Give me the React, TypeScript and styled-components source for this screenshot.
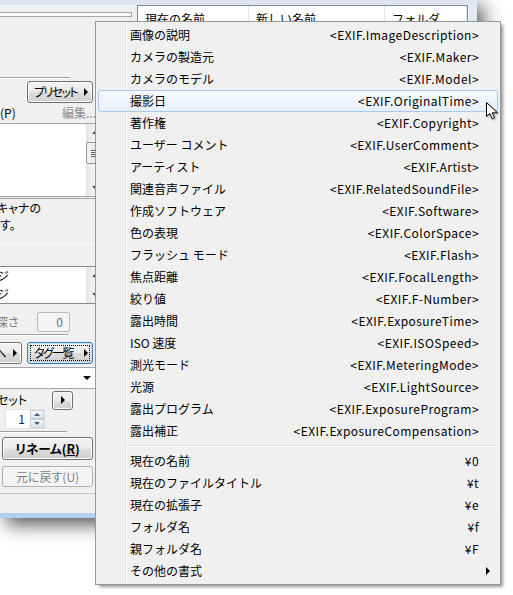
import React from 'react';
import styled, { createGlobalStyle, css } from 'styled-components';

type MenuEntry = { label: string; code?: string; sub?: boolean; hot?: boolean };

const exifItems: MenuEntry[] = [
  { label: '画像の説明', code: '<EXIF.ImageDescription>' },
  { label: 'カメラの製造元', code: '<EXIF.Maker>' },
  { label: 'カメラのモデル', code: '<EXIF.Model>' },
  { label: '撮影日', code: '<EXIF.OriginalTime>', hot: true },
  { label: '著作権', code: '<EXIF.Copyright>' },
  { label: 'ユーザー コメント', code: '<EXIF.UserComment>' },
  { label: 'アーティスト', code: '<EXIF.Artist>' },
  { label: '関連音声ファイル', code: '<EXIF.RelatedSoundFile>' },
  { label: '作成ソフトウェア', code: '<EXIF.Software>' },
  { label: '色の表現', code: '<EXIF.ColorSpace>' },
  { label: 'フラッシュ モード', code: '<EXIF.Flash>' },
  { label: '焦点距離', code: '<EXIF.FocalLength>' },
  { label: '絞り値', code: '<EXIF.F-Number>' },
  { label: '露出時間', code: '<EXIF.ExposureTime>' },
  { label: 'ISO 速度', code: '<EXIF.ISOSpeed>' },
  { label: '測光モード', code: '<EXIF.MeteringMode>' },
  { label: '光源', code: '<EXIF.LightSource>' },
  { label: '露出プログラム', code: '<EXIF.ExposureProgram>' },
  { label: '露出補正', code: '<EXIF.ExposureCompensation>' },
];

const nameItems: MenuEntry[] = [
  { label: '現在の名前', code: '¥0' },
  { label: '現在のファイルタイトル', code: '¥t' },
  { label: '現在の拡張子', code: '¥e' },
  { label: 'フォルダ名', code: '¥f' },
  { label: '親フォルダ名', code: '¥F' },
  { label: 'その他の書式', sub: true },
];

function MenuRow({ item }: { item: MenuEntry }) {
  return (
    <Item $hot={item.hot}>
      <ItemLabel>{item.label}</ItemLabel>
      {item.code && <ItemCode>{item.code}</ItemCode>}
      <ItemTail>{item.sub && <SubArrow />}</ItemTail>
    </Item>
  );
}

function VScroll({ thumb }: { thumb?: boolean }) {
  return (
    <ScrollBar>
      <ScrollButton>
        <TriUp />
      </ScrollButton>
      <ScrollTrack>{thumb && <Thumb><Grip /></Thumb>}</ScrollTrack>
      <ScrollButton>
        <TriDown />
      </ScrollButton>
    </ScrollBar>
  );
}

function App() {
  return (
    <Screen>
      <GlobalStyle />
      <Window>
        <Body>
          <LeftColumn>
            <TopTrack />
            <Panel>
              <Etched $w={70} $top={60} />
              <ButtonRow $top={2}>
                <ArrowButton $left={27}>
                  <ButtonText>プリセット</ButtonText>
                  <RightTri />
                </ArrowButton>
              </ButtonRow>
              <LabelRow>
                <span>(P)</span>
                <GrayText>編集...</GrayText>
              </LabelRow>
              <TextBox>
                <VScroll thumb />
              </TextBox>
              <Description>
                <DescLine $cut={3}>キャナの</DescLine>
                <DescLine $cut={0}>す。</DescLine>
              </Description>
              <Band />
              <ListBox>
                <ListLines>
                  <ListLine>
                    <Clipped $cut={3}>ジ</Clipped>
                  </ListLine>
                  <ListLine>
                    <Clipped $cut={3}>ジ</Clipped>
                  </ListLine>
                </ListLines>
                <VScroll />
              </ListBox>
              <DepthRow>
                <DepthLabel>深さ</DepthLabel>
                <NumberBox>0</NumberBox>
              </DepthRow>
              <Etched $w={68} $top={2} />
              <ButtonRow $top={6}>
                <ArrowButton $left={-44} $clipped>
                  <ButtonText>へ</ButtonText>
                  <RightTri />
                </ArrowButton>
                <ArrowButton $left={5} $focus>
                  <ButtonText>タグ一覧</ButtonText>
                  <RightTri />
                </ArrowButton>
              </ButtonRow>
              <Combo>
                <DownTri />
              </Combo>
              <PresetRow>
                <PresetLabel>セット</PresetLabel>
                <SmallButton>
                  <RightTri />
                </SmallButton>
              </PresetRow>
              <Spin>
                <SpinValue>1</SpinValue>
                <SpinButtons>
                  <SpinButton>
                    <TriUp $color="#3b5a8c" />
                  </SpinButton>
                  <SpinButton>
                    <TriDown $color="#3b5a8c" />
                  </SpinButton>
                </SpinButtons>
              </Spin>
              <Etched $w={67} $top={2} />
              <PushButton $top={4} $h={23}>
                <Bold>
                  リネーム(<u>R</u>)
                </Bold>
              </PushButton>
              <PushButton $top={6} $h={21} disabled>
                元に戻す(U)
              </PushButton>
            </Panel>
          </LeftColumn>
          <ListView>
            <ListHeader>
              <HeaderCell $w={111}>現在の名前</HeaderCell>
              <HeaderCell $w={136}>新しい名前</HeaderCell>
              <HeaderCell $w={82}>フォルダ</HeaderCell>
            </ListHeader>
          </ListView>
        </Body>
        <StatusBar />
      </Window>

      <Menu>
        {exifItems.map((it) => (
          <MenuRow key={it.label} item={it} />
        ))}
        <Separator />
        {nameItems.map((it) => (
          <MenuRow key={it.label} item={it} />
        ))}
      </Menu>

      <Cursor width="14" height="19" viewBox="0 0 14 19">
        <path
          d="M0.5 0.5 L0.5 14.5 L3.8 11.5 L6.2 16.8 L8.5 15.8 L6.2 10.8 L11.5 10.8 Z"
          fill="#fff"
          stroke="#000"
          strokeWidth="1"
          strokeLinejoin="miter"
        />
      </Cursor>
    </Screen>
  );
}

const GlobalStyle = createGlobalStyle`
  html, body {
    margin: 0;
    padding: 0;
    background: #fff;
  }
  body {
    font-family: "Noto Sans CJK JP", "Noto Sans", sans-serif;
    font-size: 12px;
    color: #000;
    overflow: hidden;
  }
`;

const Screen = styled.div`
  position: relative;
  width: 513px;
  height: 595px;
  overflow: hidden;
  background: #fff;
`;

const Window = styled.div`
  width: 477px;
  height: 518px;
  box-sizing: border-box;
  display: flex;
  flex-direction: column;
  background: #f0f0f0;
  border-top: 5px solid #dfe5ee;
  border-right: 8px solid #e3eaf3;
  border-bottom: 5px solid #b3cfee;
  box-shadow: 6px 6px 18px rgba(0, 0, 0, 0.7);
`;

const Body = styled.div`
  flex: 1;
  display: flex;
  min-height: 0;
`;

const StatusBar = styled.div`
  height: 20px;
  box-sizing: border-box;
  border-top: 1px solid #c2c2c2;
  background: #efefef;
`;

const LeftColumn = styled.div`
  width: 133px;
  display: flex;
  flex-direction: column;
`;

const TopTrack = styled.div`
  margin-top: 7px;
  width: 132px;
  height: 5px;
  box-sizing: border-box;
  border: 1px solid #a5a5a5;
  border-left: none;
  background: #fbfbfb;
`;

const Panel = styled.div`
  width: 104px;
  display: flex;
  flex-direction: column;
  font-feature-settings: 'palt';
`;

const Etched = styled.div<{ $w: number; $top: number }>`
  width: ${(p) => p.$w}px;
  margin-top: ${(p) => p.$top}px;
  height: 2px;
  box-sizing: border-box;
  border-top: 1px solid #a0a0a0;
  border-bottom: 1px solid #fff;
`;

const ButtonRow = styled.div<{ $top: number }>`
  display: flex;
  margin-top: ${(p) => p.$top}px;
  height: 22px;
`;

const buttonFace = css`
  box-sizing: border-box;
  border: 1px solid #707070;
  border-radius: 3px;
  background: linear-gradient(#f2f2f2 0%, #ebebeb 50%, #dddddd 51%, #cfcfcf 100%);
  box-shadow: inset 0 0 0 1px #fcfcfc;
`;

const ArrowButton = styled.div<{ $left: number; $focus?: boolean; $clipped?: boolean }>`
  ${buttonFace};
  flex: none;
  width: 66px;
  height: 22px;
  margin-left: ${(p) => p.$left}px;
  display: flex;
  align-items: center;
  justify-content: space-between;
  padding: 0 4px 0 6px;
  line-height: 20px;
  white-space: nowrap;
  ${(p) =>
    p.$clipped &&
    css`
      justify-content: flex-end;
      gap: 8px;
    `}
  ${(p) =>
    p.$focus &&
    css`
      border-color: #3c7fb1;
      box-shadow: inset 0 0 0 1px #bfe6f9;
      outline: 1px dotted #000;
      outline-offset: -4px;
    `}
`;

const ButtonText = styled.span`
  letter-spacing: -1.6px;
`;

const SmallButton = styled.div`
  ${buttonFace};
  width: 21px;
  height: 19px;
  display: flex;
  align-items: center;
  justify-content: center;
`;

const PushButton = styled.div<{ $top: number; $h: number; disabled?: boolean }>`
  ${buttonFace};
  margin-top: ${(p) => p.$top}px;
  margin-left: 2px;
  width: 91px;
  height: ${(p) => p.$h}px;
  display: flex;
  align-items: center;
  justify-content: center;
  white-space: nowrap;
  ${(p) =>
    p.disabled &&
    css`
      border-color: #adb2b5;
      background: #f4f4f4;
      box-shadow: none;
      color: #838383;
    `}
`;

const Bold = styled.span`
  font-weight: 700;
  font-size: 12.5px;
`;

const RightTri = styled.span`
  flex: none;
  width: 0;
  height: 0;
  border-top: 4px solid transparent;
  border-bottom: 4px solid transparent;
  border-left: 4px solid #000;
`;

const DownTri = styled.span`
  width: 0;
  height: 0;
  border-left: 4px solid transparent;
  border-right: 4px solid transparent;
  border-top: 4px solid #000;
`;

const TriUp = styled.span<{ $color?: string }>`
  width: 0;
  height: 0;
  border-left: 3px solid transparent;
  border-right: 3px solid transparent;
  border-bottom: 3px solid ${(p) => p.$color ?? '#4a4a4a'};
`;

const TriDown = styled.span<{ $color?: string }>`
  width: 0;
  height: 0;
  border-left: 3px solid transparent;
  border-right: 3px solid transparent;
  border-top: 3px solid ${(p) => p.$color ?? '#4a4a4a'};
`;

const LabelRow = styled.div`
  width: 96px;
  height: 17px;
  margin-top: 1px;
  display: flex;
  justify-content: space-between;
  align-items: center;
  line-height: 17px;
  white-space: nowrap;
`;

const GrayText = styled.span`
  color: #8d8d8d;
`;

const Clipped = styled.span<{ $cut: number }>`
  display: inline-block;
  margin-left: -${(p) => p.$cut}px;
  white-space: nowrap;
  flex: none;
`;

const TextBox = styled.div`
  margin-top: 2px;
  height: 74px;
  box-sizing: border-box;
  border: 1px solid #a0a0a0;
  border-left: none;
  background: #fff;
  display: flex;
  justify-content: flex-end;
`;

const ScrollBar = styled.div`
  width: 17px;
  display: flex;
  flex-direction: column;
  background: linear-gradient(to right, #e3e3e3, #f1f1f1 40%, #f4f4f4);
`;

const ScrollButton = styled.div`
  height: 17px;
  flex: none;
  display: flex;
  align-items: center;
  justify-content: center;
`;

const ScrollTrack = styled.div`
  flex: 1;
  display: flex;
  flex-direction: column;
`;

const Thumb = styled.div`
  margin-top: 1px;
  height: 22px;
  box-sizing: border-box;
  border: 1px solid #959595;
  border-radius: 2px;
  background: linear-gradient(to right, #f4f4f4, #e8e8e8 50%, #d9d9d9);
  display: flex;
  align-items: center;
  justify-content: center;
`;

const Grip = styled.div`
  width: 7px;
  height: 7px;
  background: repeating-linear-gradient(#5a5a5a 0 1px, #fbfbfb 1px 2px);
`;

const Description = styled.div`
  margin-top: 1px;
  height: 46px;
  box-sizing: border-box;
  border-top: 1px solid #a8a8a8;
  display: flex;
  flex-direction: column;
  align-items: flex-start;
  overflow: hidden;
`;

const DescLine = styled.span<{ $cut: number }>`
  height: 17px;
  line-height: 17px;
  margin-left: -${(p) => p.$cut}px;
  white-space: nowrap;
`;

const Band = styled.div`
  height: 22px;
  border-top: 1px solid #fcfcfc;
  box-sizing: border-box;
  background: #f0f0f0;
`;

const ListBox = styled.div`
  height: 38px;
  box-sizing: border-box;
  border: 1px solid #828790;
  border-left: none;
  background: #fff;
  display: flex;
`;

const ListLines = styled.div`
  flex: 1;
  overflow: hidden;
`;

const ListLine = styled.div`
  height: 18px;
  line-height: 18px;
`;

const DepthRow = styled.div`
  margin-top: 7px;
  height: 21px;
  display: flex;
  align-items: center;
`;

const DepthLabel = styled.span`
  flex: none;
  width: 41px;
  margin-left: -4px;
  color: #7a7a7a;
  white-space: nowrap;
`;

const NumberBox = styled.div`
  width: 33px;
  height: 20px;
  box-sizing: border-box;
  border: 1px solid #b9b9b9;
  border-radius: 2px;
  background: #f4f4f4;
  color: #6c6c9c;
  text-align: right;
  padding-right: 6px;
  line-height: 18px;
`;

const Combo = styled.div`
  margin-top: 3px;
  width: 104px;
  height: 22px;
  box-sizing: border-box;
  border: 1px solid #a5a5a5;
  border-left: none;
  background: #fff;
  display: flex;
  align-items: center;
  padding-left: 83px;
`;

const PresetRow = styled.div`
  margin-top: 2px;
  height: 18px;
  display: flex;
  align-items: center;
  line-height: 18px;
`;

const PresetLabel = styled.span`
  flex: none;
  width: 55px;
  margin-left: -3px;
  white-space: nowrap;
`;

const Spin = styled.div`
  margin-left: 5px;
  width: 40px;
  height: 20px;
  box-sizing: border-box;
  border: 1px solid #e0e3ea;
  background: #fff;
  display: flex;
`;

const SpinValue = styled.div`
  flex: 1;
  text-align: right;
  padding-right: 5px;
  line-height: 18px;
  color: #1a1a50;
`;

const SpinButtons = styled.div`
  width: 14px;
  display: flex;
  flex-direction: column;
`;

const SpinButton = styled.div`
  flex: 1;
  box-sizing: border-box;
  border: 1px solid #c7cfd9;
  background: linear-gradient(#f3f6fa, #dfe6ee);
  display: flex;
  align-items: center;
  justify-content: center;
`;

const ListView = styled.div`
  margin-left: 4px;
  margin-right: 1px;
  flex: 1;
  border: 1px solid #828790;
  background: #fff;
`;

const ListHeader = styled.div`
  display: flex;
  height: 25px;
  border-bottom: 1px solid #e5e5e5;
`;

const HeaderCell = styled.div<{ $w: number }>`
  width: ${(p) => p.$w}px;
  box-sizing: border-box;
  padding-left: 7px;
  border-right: 1px solid #e5e5e5;
  line-height: 25px;
  white-space: nowrap;
  overflow: hidden;
`;

const Menu = styled.div`
  position: absolute;
  left: 95px;
  top: 21px;
  width: 406px;
  box-sizing: border-box;
  padding: 2px 0;
  border: 1px solid #979797;
  background: linear-gradient(
      to right,
      transparent 29px,
      #e2e3e3 29px,
      #e2e3e3 30px,
      #ffffff 30px,
      #ffffff 31px,
      transparent 31px
    ),
    #f0f0f0;
  box-shadow: 3px 3px 3px -1px rgba(0, 0, 0, 0.4);
`;

const Item = styled.div<{ $hot?: boolean }>`
  display: flex;
  align-items: center;
  height: 22px;
  box-sizing: border-box;
  margin: 0 2px;
  padding-left: 31px;
  border: 1px solid transparent;
  border-radius: 3px;
  line-height: 20px;
  white-space: nowrap;
  ${(p) =>
    p.$hot &&
    css`
      border-color: #a9c9ee;
      background: linear-gradient(#f6f9fd, #e7eff9);
    `}
`;

const ItemLabel = styled.span`
  flex: 1;
`;

const ItemCode = styled.span`
  text-align: right;
  letter-spacing: 0.45px;
`;

const ItemTail = styled.span`
  width: 18px;
  flex: none;
  display: flex;
  justify-content: center;
  align-items: center;
`;

const SubArrow = styled.span`
  width: 0;
  height: 0;
  border-top: 4px solid transparent;
  border-bottom: 4px solid transparent;
  border-left: 4px solid #000;
`;

const Separator = styled.div`
  height: 8px;
  margin: 0 2px 0 30px;
  display: flex;
  flex-direction: column;
  justify-content: center;
  &::before {
    content: '';
    height: 1px;
    background: #e0e0e0;
  }
  &::after {
    content: '';
    height: 1px;
    background: #ffffff;
  }
`;

const Cursor = styled.svg`
  position: absolute;
  left: 486px;
  top: 102px;
  overflow: visible;
  filter: drop-shadow(1px 1px 1px rgba(0, 0, 0, 0.3));
`;

export default App;
